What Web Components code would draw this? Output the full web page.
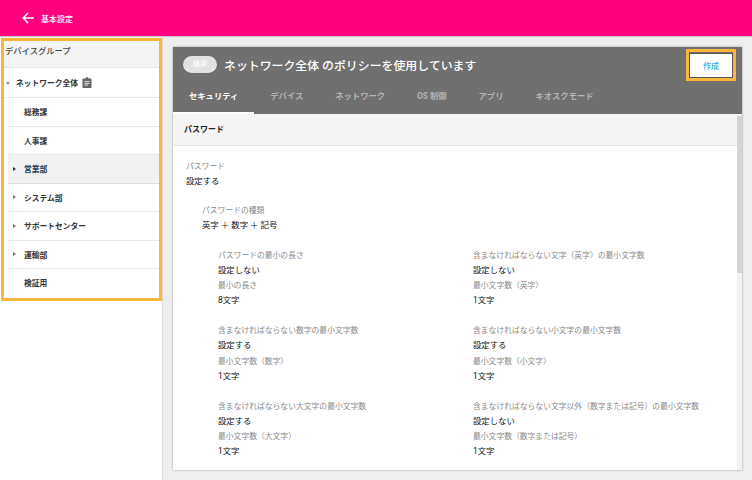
<!DOCTYPE html>
<html lang="ja">
<head>
<meta charset="utf-8">
<title>基本設定</title>
<style>
  html, body { margin: 0; height: 100%; overflow: hidden; }
  body { font-family: "Roboto", "Noto Sans CJK JP", sans-serif; background: #eee; color: #222; }
</style>
</head>
<body>
<app-shell>
  <app-bar slot="bar">基本設定</app-bar>
  <device-tree slot="side" heading="デバイスグループ">
    <tree-item root expander="down" icon>ネットワーク全体</tree-item>
    <tree-item>総務課</tree-item>
    <tree-item>人事課</tree-item>
    <tree-item expander="right" selected>営業部</tree-item>
    <tree-item expander="right">システム部</tree-item>
    <tree-item expander="right">サポートセンター</tree-item>
    <tree-item expander="right">運輸部</tree-item>
    <tree-item last>検証用</tree-item>
  </device-tree>
  <policy-card slot="main" title-text="ネットワーク全体 のポリシーを使用しています">
    <setting-field label="パスワード" value="設定する"></setting-field>
    <div style="margin:13px 0 0 16px">
      <setting-field label="パスワードの種類" value="英字 ＋ 数字 ＋ 記号"></setting-field>
      <setting-grid>
        <setting-pair a="パスワードの最小の長さ" b="設定しない" c="最小の長さ" d="8文字"></setting-pair>
        <setting-pair a="含まなければならない文字（英字）の最小文字数" b="設定しない" c="最小文字数（英字）" d="1文字"></setting-pair>
        <setting-pair a="含まなければならない数字の最小文字数" b="設定する" c="最小文字数（数字）" d="1文字"></setting-pair>
        <setting-pair a="含まなければならない小文字の最小文字数" b="設定する" c="最小文字数（小文字）" d="1文字"></setting-pair>
        <setting-pair a="含まなければならない大文字の最小文字数" b="設定する" c="最小文字数（大文字）" d="1文字"></setting-pair>
        <setting-pair a="含まなければならない文字以外（数字または記号）の最小文字数" b="設定しない" c="最小文字数（数字または記号）" d="1文字"></setting-pair>
      </setting-grid>
    </div>
  </policy-card>
</app-shell>

<script>
const shellTemplate = document.createElement('template');
shellTemplate.innerHTML = `
<style>
  :host { display: flex; flex-direction: column; width: 752px; height: 480px; }
  .bar { flex: none; }
  .body { flex: 1; display: flex; min-height: 0; }
  .side { flex: none; width: 162px; background: #fff; box-shadow: 1px 0 1px #ddd; }
  .main { flex: 1; min-width: 0; padding: 11px 10px 10px 11px; display: flex; }
</style>
<div class="bar"><slot name="bar"></slot></div>
<div class="body">
  <div class="side"><slot name="side"></slot></div>
  <div class="main"><slot name="main"></slot></div>
</div>`;

class AppShell extends HTMLElement {
  constructor() {
    super();
    this.attachShadow({ mode: 'open' }).appendChild(shellTemplate.content.cloneNode(true));
  }
}
customElements.define('app-shell', AppShell);

const barTemplate = document.createElement('template');
barTemplate.innerHTML = `
<style>
  :host { display: flex; align-items: center; height: 36px; background: #ff007f; color: #fff;
    box-shadow: 0 1px 1px #c9c9c9; position: relative; z-index: 1; }
  svg { width: 12px; height: 12px; margin-left: 22px; margin-right: 7px; }
  span { font-size: 8px; font-weight: 500; }
</style>
<svg viewBox="0 0 12 12" fill="none" stroke="#fff" stroke-width="1.5">
  <path d="M12 6H1.2M6 1 1.2 6 6 11"/>
</svg>
<span><slot></slot></span>`;

class AppBar extends HTMLElement {
  constructor() {
    super();
    this.attachShadow({ mode: 'open' }).appendChild(barTemplate.content.cloneNode(true));
  }
}
customElements.define('app-bar', AppBar);

const treeTemplate = document.createElement('template');
treeTemplate.innerHTML = `
<style>
  :host { display: block; margin: 2px 0 0 1px; border: 3px solid #f9b53c; background: #fff; }
  h2 { margin: 0; height: 26px; line-height: 21px; padding-left: 1px; font-size: 8.3px; font-weight: 500;
    color: #444; background: #f4f4f4; border-bottom: 1px solid #e6e6e6; }
</style>
<h2></h2>
<slot></slot>`;

class DeviceTree extends HTMLElement {
  constructor() {
    super();
    this.attachShadow({ mode: 'open' }).appendChild(treeTemplate.content.cloneNode(true));
    this.shadowRoot.querySelector('h2').textContent = this.getAttribute('heading');
  }
}
customElements.define('device-tree', DeviceTree);

const itemTemplate = document.createElement('template');
itemTemplate.innerHTML = `
<style>
  :host { display: block; height: 28.5px; margin-left: 4px; box-sizing: border-box;
    border-bottom: 1px solid #e8e8e8; font-size: 7.75px; font-weight: 700; color: #333; }
  :host([root]) { height: 30px; margin-left: 0; }
  :host([last]) { border-bottom: 0; height: 29px; padding-bottom: 2px; }
  :host([selected]) { background: #f2f2f2; color: #24384f; border-bottom-color: #ddd; }
  .row { display: flex; align-items: center; height: 100%; padding-left: 16px; position: relative; }
  :host([root]) .row { padding-left: 12px; }
  .arrow { position: absolute; left: 5px; top: 50%; margin-top: -2px; width: 0; height: 0; }
  .arrow.right { border-left: 3px solid #777; border-top: 2px solid transparent; border-bottom: 2px solid transparent; }
  .arrow.down { left: 2px; margin-top: -1px; border-top: 3px solid #888; border-left: 2px solid transparent; border-right: 2px solid transparent; }
  :host([selected]) .arrow.right { border-left-color: #24384f; }
  svg { display: none; width: 10px; height: 11.5px; margin-left: 4px; }
  :host([icon]) svg { display: block; }
</style>
<div class="row"><i class="arrow" hidden></i><slot></slot>
  <svg viewBox="0 0 11 12">
    <path fill="#666" d="M1.5 1.4h2.3C4 .6 4.7 0 5.5 0s1.5.6 1.7 1.4h2.3c.6 0 1 .4 1 1v8.6c0 .6-.4 1-1 1h-8c-.6 0-1-.4-1-1V2.4c0-.6.4-1 1-1z"/>
    <path fill="#e8e8e8" d="M2.6 4h5.8v1H2.6zM2.6 6h5.8v1H2.6zM2.6 8h4v1h-4z"/>
  </svg>
</div>`;

class TreeItem extends HTMLElement {
  constructor() {
    super();
    this.attachShadow({ mode: 'open' }).appendChild(itemTemplate.content.cloneNode(true));
    const arrow = this.shadowRoot.querySelector('.arrow');
    const expander = this.getAttribute('expander');
    if (expander) {
      arrow.hidden = false;
      arrow.classList.add(expander);
    }
  }
}
customElements.define('tree-item', TreeItem);

const cardTemplate = document.createElement('template');
cardTemplate.innerHTML = `
<style>
  :host { display: flex; flex-direction: column; flex: 1; min-width: 0; background: #fff;
    box-shadow: 0 0 2px #999; overflow: hidden; }
  header { flex: none; height: 67px; background: #707070; color: #fff; box-sizing: border-box; }
  .top { display: flex; align-items: center; height: 34px; padding: 0 6px 0 10px; }
  .badge { width: 34px; height: 17px; border-radius: 9px; background: #e2e2e2; color: #fff;
    font-size: 7px; line-height: 17px; text-align: center; box-shadow: 0 0 1px #555; }
  .title { margin-left: 7px; font-size: 11.9px; font-weight: 500; flex: 1; }
  .callout { border: 3px solid #f9b53c; padding: 1px 0 0 0; margin-top: 1px; }
  button { display: block; width: 44px; height: 25px; margin: 0; padding: 0; background: #fff;
    border: 1px solid #555; color: #35aedb; font: 500 8px "Roboto", "Noto Sans CJK JP", sans-serif; }
  nav { display: flex; height: 33px; }
  .tab { padding: 0 16px; line-height: 30px; font-size: 8.3px; font-weight: 700; color: #b5b5b5; }
  .tab.on { color: #fff; border-bottom: 2px solid #fff; height: 31px; }
  .body { flex: 1; display: flex; min-height: 0; }
  .scroll { flex: 1; min-width: 0; overflow: hidden; }
  h3 { margin: 0; height: 32px; line-height: 32px; padding-left: 11px; font-size: 8px; font-weight: 700;
    color: #222; background: #f5f5f5; border-bottom: 1px solid #e4e4e4; box-sizing: border-box; }
  .content { padding: 13px 13px 0 13px; }
  .track { flex: none; width: 5px; background: #f3f3f3; padding-top: 2px; }
  .thumb { height: 157px; background: #d4d4d4; border-radius: 1px; }
</style>
<header>
  <div class="top">
    <span class="badge">継承</span>
    <span class="title"></span>
    <span class="callout"><button>作成</button></span>
  </div>
  <nav>
    <span class="tab on">セキュリティ</span>
    <span class="tab">デバイス</span>
    <span class="tab">ネットワーク</span>
    <span class="tab">OS 制御</span>
    <span class="tab">アプリ</span>
    <span class="tab">キオスクモード</span>
  </nav>
</header>
<div class="body">
  <div class="scroll">
    <h3>パスワード</h3>
    <div class="content"><slot></slot></div>
  </div>
  <div class="track"><div class="thumb"></div></div>
</div>`;

class PolicyCard extends HTMLElement {
  constructor() {
    super();
    this.attachShadow({ mode: 'open' }).appendChild(cardTemplate.content.cloneNode(true));
    this.shadowRoot.querySelector('.title').textContent = this.getAttribute('title-text');
  }
}
customElements.define('policy-card', PolicyCard);

const fieldTemplate = document.createElement('template');
fieldTemplate.innerHTML = `
<style>
  :host { display: block; }
  .label { height: 15px; line-height: 15px; font-size: 7.8px; color: #8a8a8a; white-space: nowrap; }
  .value { height: 15.5px; line-height: 15.5px; font-size: 8.4px; font-weight: 400; color: #111; white-space: nowrap; }
</style>
<div class="label"></div>
<div class="value"></div>`;

class SettingField extends HTMLElement {
  constructor() {
    super();
    this.attachShadow({ mode: 'open' }).appendChild(fieldTemplate.content.cloneNode(true));
  }

  connectedCallback() {
    this.shadowRoot.querySelector('.label').textContent = this.getAttribute('label');
    this.shadowRoot.querySelector('.value').textContent = this.getAttribute('value');
  }
}
customElements.define('setting-field', SettingField);

const gridTemplate = document.createElement('template');
gridTemplate.innerHTML = `
<style>
  :host { display: grid; grid-template-columns: 255px 1fr; row-gap: 14.5px; margin: 14.5px 0 0 16px; }
</style>
<slot></slot>`;

class SettingGrid extends HTMLElement {
  constructor() {
    super();
    this.attachShadow({ mode: 'open' }).appendChild(gridTemplate.content.cloneNode(true));
  }
}
customElements.define('setting-grid', SettingGrid);

class SettingPair extends HTMLElement {
  constructor() {
    super();
    const root = this.attachShadow({ mode: 'open' });
    root.innerHTML = '<style>:host{display:block}</style>';
    [['a', 'b'], ['c', 'd']].forEach(([l, v]) => {
      const field = document.createElement('setting-field');
      field.setAttribute('label', this.getAttribute(l));
      field.setAttribute('value', this.getAttribute(v));
      root.appendChild(field);
    });
  }
}
customElements.define('setting-pair', SettingPair);
</script>
</body>
</html>
